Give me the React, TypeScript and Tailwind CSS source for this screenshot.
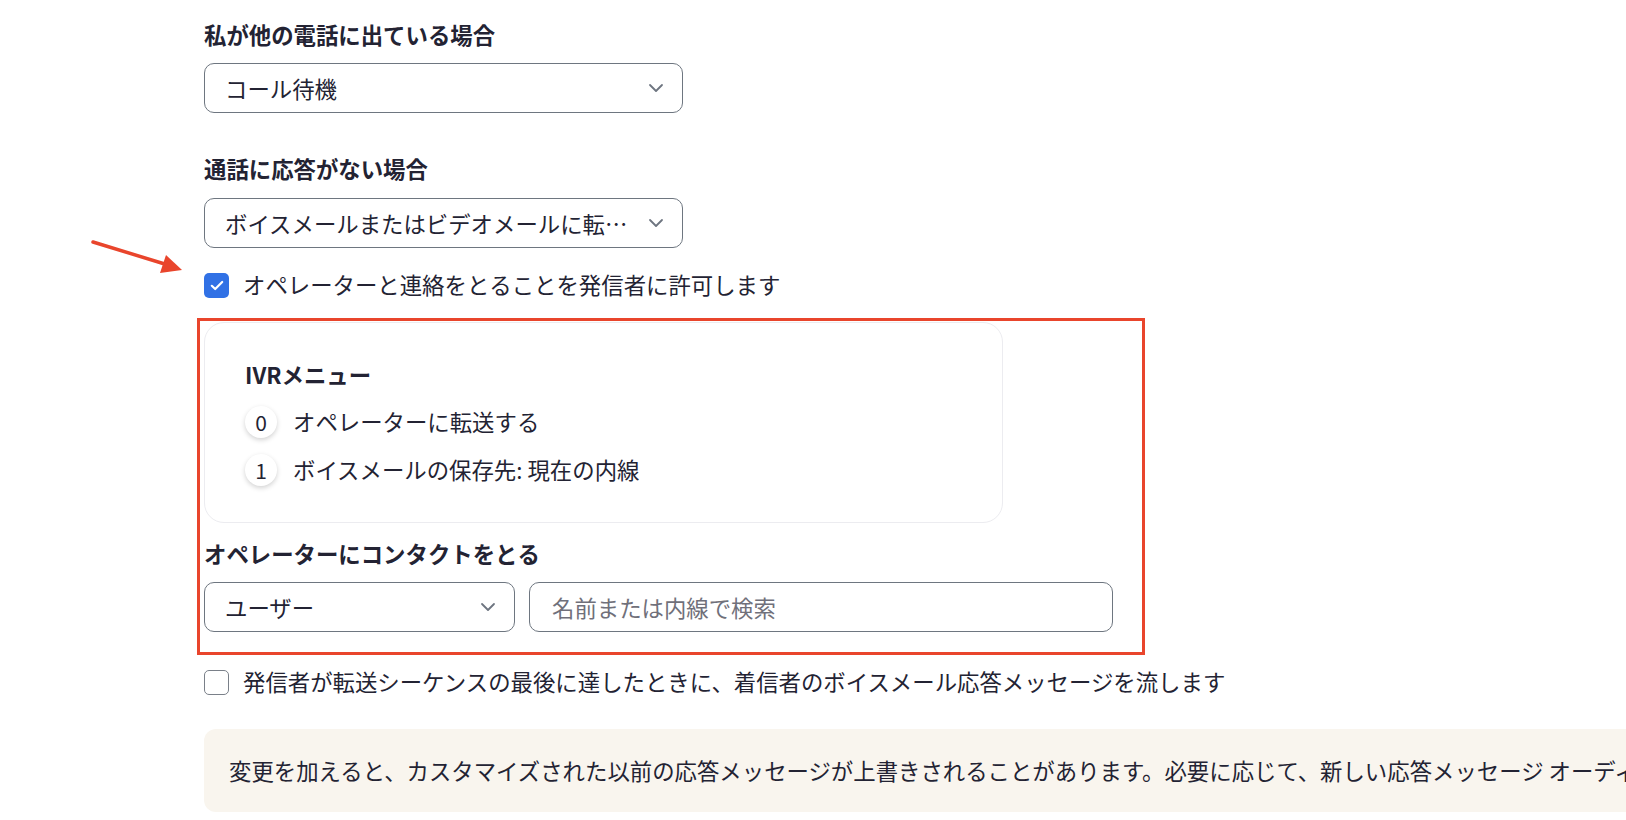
import React from 'react';

const Chevron: React.FC = () => (
  <svg width="16" height="10" viewBox="0 0 16 10" fill="none" className="shrink-0">
    <path d="M2 2l6 6 6-6" stroke="#6e7580" strokeWidth="1.8" strokeLinecap="round" strokeLinejoin="round" />
  </svg>
);

const Select: React.FC<{ value: string; className?: string }> = ({ value, className = '' }) => (
  <div
    className={`flex h-[50px] items-center justify-between rounded-[10px] border border-[#6e7680] bg-white pl-[20px] pr-[18px] ${className}`}
  >
    <span className="min-w-0 truncate pr-[12px]">{value}</span>
    <Chevron />
  </div>
);

const MenuItem: React.FC<{ num: string; text: string }> = ({ num, text }) => (
  <div className="flex h-[32px] items-center gap-[16px]">
    <div className="flex h-[32px] w-[32px] items-center justify-center rounded-full bg-white text-[21px] shadow-[0_2px_5px_rgba(0,0,0,0.18)]">
      {num}
    </div>
    <span className="pb-[3px]">{text}</span>
  </div>
);

const App: React.FC = () => {
  return (
    <div className="relative h-[820px] w-full overflow-hidden bg-white font-['Noto_Sans_CJK_JP',sans-serif] text-[22.4px] leading-[30px] text-[#232333]">
      <div className="flex flex-col pl-[204px] pt-[19px]">
        {/* When I'm on another call */}
        <div className="font-bold">私が他の電話に出ている場合</div>
        <Select value="コール待機" className="mt-[14px] w-[479px]" />

        {/* When the call isn't answered */}
        <div className="mt-[40px] font-bold">通話に応答がない場合</div>
        <Select value="ボイスメールまたはビデオメールに転送する" className="mt-[15px] w-[479px]" />

        <label className="mt-[22px] flex h-[30px] items-center gap-[14px]">
          <span className="flex h-[25px] w-[25px] shrink-0 items-center justify-center rounded-[5px] bg-[#3171e5]">
            <svg width="14" height="11" viewBox="0 0 14 11" fill="none">
              <path d="M1.8 5.8l3.4 3.2L12.2 2" stroke="white" strokeWidth="2.2" strokeLinecap="round" strokeLinejoin="round" />
            </svg>
          </span>
          <span className="pb-[3px]">オペレーターと連絡をとることを発信者に許可します</span>
        </label>

        {/* IVR menu card */}
        <div className="mt-[22px] w-[799px] rounded-[20px] border border-[#ececf0] bg-white pb-[36px] pl-[40px] pt-[36px]">
          <div className="font-bold">IVRメニュー</div>
          <div className="mt-[17px] flex flex-col gap-[16px]">
            <MenuItem num="0" text="オペレーターに転送する" />
            <MenuItem num="1" text="ボイスメールの保存先: 現在の内線" />
          </div>
        </div>

        <div className="mt-[15px] font-bold">オペレーターにコンタクトをとる</div>
        <div className="mt-[14px] flex gap-[14px]">
          <Select value="ユーザー" className="w-[311px]" />
          <div className="flex h-[50px] w-[584px] items-center rounded-[10px] border border-[#6e7680] bg-white pl-[22px] text-[#70707a]">
            名前または内線で検索
          </div>
        </div>

        <label className="mt-[35px] flex h-[30px] items-center gap-[14px]">
          <span className="h-[25px] w-[25px] shrink-0 rounded-[5px] border border-[#7a8089] bg-white" />
          <span className="pb-[3px]">発信者が転送シーケンスの最後に達したときに、着信者のボイスメール応答メッセージを流します</span>
        </label>

        <div className="mt-[32px] flex h-[83px] w-[1600px] shrink-0 items-center whitespace-nowrap rounded-[12px] bg-[#f9f5ee] pb-[2px] pl-[25px]">
          変更を加えると、カスタマイズされた以前の応答メッセージが上書きされることがあります。必要に応じて、新しい応答メッセージ オーディオを作成してください。
        </div>
      </div>

      {/* Annotation overlays */}
      <div className="pointer-events-none absolute left-[197px] top-[318px] h-[337px] w-[948px] border-[3px] border-[#e9452c]" />
      <svg className="pointer-events-none absolute left-[88px] top-[234px]" width="100" height="42" viewBox="0 0 100 42" fill="none">
        <line x1="5" y1="8" x2="80" y2="31" stroke="#e9452c" strokeWidth="3.5" strokeLinecap="round" />
        <path d="M94 36 L72 39 L78 21 Z" fill="#e9452c" />
      </svg>
    </div>
  );
};

export default App;
